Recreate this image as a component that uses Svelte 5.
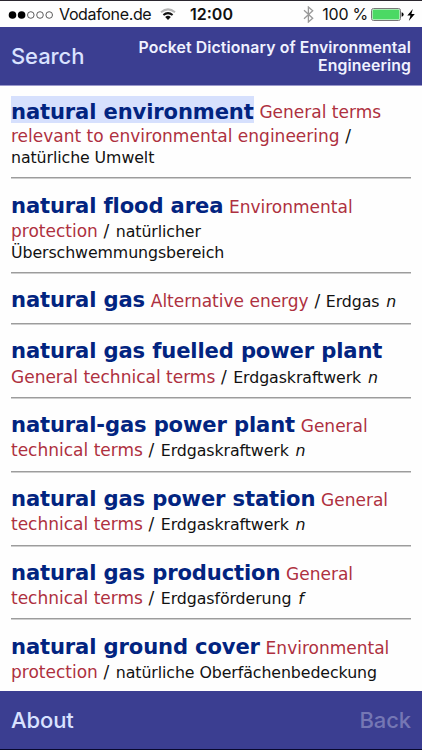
<script>
	const title = ['Pocket Dictionary of Environmental', 'Engineering']

	// every entry is a list of lines, every line a list of [kind, text] runs
	const entries = [
		[
			[['head marked', 'natural environment'], ['topic', 'General terms']],
			[['topic', 'relevant to environmental engineering'], ['slash', '/']],
			[['german', 'natürliche Umwelt']]
		],
		[
			[['head', 'natural flood area'], ['topic', 'Environmental']],
			[['topic', 'protection'], ['slash', '/'], ['german', 'natürlicher']],
			[['german', 'Überschwemmungsbereich']]
		],
		[
			[['head', 'natural gas'], ['topic', 'Alternative energy'], ['slash', '/'], ['german', 'Erdgas'], ['gender', 'n']]
		],
		[
			[['head', 'natural gas fuelled power plant']],
			[['topic', 'General technical terms'], ['slash', '/'], ['german', 'Erdgaskraftwerk'], ['gender', 'n']]
		],
		[
			[['head', 'natural-gas power plant'], ['topic', 'General']],
			[['topic', 'technical terms'], ['slash', '/'], ['german', 'Erdgaskraftwerk'], ['gender', 'n']]
		],
		[
			[['head', 'natural gas power station'], ['topic', 'General']],
			[['topic', 'technical terms'], ['slash', '/'], ['german', 'Erdgaskraftwerk'], ['gender', 'n']]
		],
		[
			[['head', 'natural gas production'], ['topic', 'General']],
			[['topic', 'technical terms'], ['slash', '/'], ['german', 'Erdgasförderung'], ['gender', 'f']]
		],
		[
			[['head', 'natural ground cover'], ['topic', 'Environmental']],
			[['topic', 'protection'], ['slash', '/'], ['german', 'natürliche Oberfächenbedeckung']]
		]
	]
</script>

<div class="phone">
	<div class="status">
		<div class="left">
			<svg class="dots" width="46" height="8" viewBox="0 0 46 8">
				<circle cx="4.5" cy="4" r="3.8" />
				<circle cx="13.6" cy="4" r="3.8" />
				<circle class="off" cx="22.8" cy="4" r="3.3" />
				<circle class="off" cx="32" cy="4" r="3.3" />
				<circle class="off" cx="41.2" cy="4" r="3.3" />
			</svg>
			<span class="carrier">Vodafone.de</span>
			<svg class="wifi" width="16" height="13" viewBox="0 0 16 13">
				<path class="weak" d="M1 4.3Q8 -1.6 15 4.3" />
				<path d="M3.4 7Q8 3.2 12.6 7" />
				<path class="tip" d="M5.2 8.9Q8 6.7 10.8 8.9L8 12Z" />
			</svg>
		</div>
		<span class="time">12:00</span>
		<div class="right">
			<svg class="bluetooth" width="11" height="17" viewBox="0 0 11 17">
				<path d="M1 4.3L9.7 12.3L5.4 16V1L9.7 4.7L1 12.7" />
			</svg>
			<span class="percent">100 %</span>
			<svg width="33" height="13" viewBox="0 0 33 13">
				<rect class="shell" x=".5" y=".5" width="29" height="12" rx="2" />
				<rect class="charge" x="1.5" y="1.5" width="27" height="10" rx="1" />
				<path d="M30.6 4.3Q32.6 4.8 32.6 6.5T30.6 8.7Z" />
			</svg>
			<svg class="bolt" width="8" height="12" viewBox="0 0 8 12">
				<path d="M5.8 0L.3 6.6H3.5L1.8 12L7.8 4.9H4.4Z" />
			</svg>
		</div>
	</div>

	<header>
		<button>Search</button>
		<h1>
			{#each title as line}
				<span>{line}</span>
			{/each}
		</h1>
	</header>

	<main>
		{#each entries as lines}
			<article>
				{#each lines as line}
					<p>
						{#each line as [kind, text]}
							<span class={kind}>{text}</span>{' '}
						{/each}
					</p>
				{/each}
			</article>
		{/each}
	</main>

	<footer>
		<button>About</button>
		<button disabled>Back</button>
	</footer>
</div>

<style>
	:global(body) {
		margin: 0;
		background: #fff;
	}
	.phone {
		width: 422px;
		height: 750px;
		display: flex;
		flex-direction: column;
		overflow: hidden;
		box-sizing: border-box;
		border-top: 1px solid #2a262e;
		border-bottom: 1px solid #07072c;
		background: #fefefe;
		font-family: Inter, 'Liberation Sans', sans-serif;
	}
	.status {
		flex: none;
		height: 26px;
		display: grid;
		grid-template-columns: 1fr auto 1fr;
		align-items: center;
		padding: 0 7px 0 8px;
		color: #111;
		font-size: 16px;
		line-height: 27px;
		white-space: nowrap;
	}
	.left,
	.right {
		display: flex;
		align-items: center;
	}
	.right {
		justify-content: flex-end;
	}
	.carrier {
		margin-left: 5px;
		letter-spacing: -0.35px;
	}
	.dots .off {
		fill: none;
		stroke: #333;
		stroke-width: 0.8;
	}
	.wifi {
		margin-left: 9px;
		fill: none;
		stroke: #111;
		stroke-width: 2;
	}
	.wifi .weak {
		stroke: #b5b5b5;
	}
	.wifi .tip {
		fill: #111;
		stroke: none;
	}
	.time {
		font-weight: 600;
	}
	.bluetooth {
		margin-right: 8px;
		fill: none;
		stroke: #999;
		stroke-width: 1.3;
	}
	.percent {
		margin-right: 3px;
		letter-spacing: -0.25px;
	}
	.shell {
		fill: #fff;
		stroke: #777;
	}
	.charge {
		fill: #4bd964;
	}
	.bolt {
		margin-left: 3px;
	}
	header,
	footer {
		flex: none;
		display: flex;
		justify-content: space-between;
		padding: 0 11px;
		background: #3b3e91;
	}
	header {
		height: 58px;
		border-bottom: 1px solid #9a98cb;
	}
	footer {
		height: 58.5px;
	}
	button {
		border: 0 none;
		padding: 0;
		background: transparent;
		color: #d9e2ff;
		font: 500 22px/58px Inter, 'Liberation Sans', sans-serif;
		letter-spacing: -0.1px;
	}
	button:disabled {
		color: #7577b4;
	}
	h1 {
		margin: 0;
		padding-top: 11.5px;
		color: #f0f2ff;
		font-size: 15.8px;
		font-weight: 600;
		letter-spacing: 0.12px;
		line-height: 18.5px;
		text-align: right;
	}
	h1 span {
		display: block;
	}
	main {
		flex: 1;
		min-height: 0;
		overflow: hidden;
		padding: 0 11px;
		font-family: 'DejaVu Sans', Verdana, sans-serif;
	}
	article {
		padding: 12.4px 0 9.6px;
		border-bottom: 1px solid #cecece;
		box-shadow: inset 0 -1px #9c9c9c;
	}
	article:first-child {
		padding-top: 11.3px;
	}
	p {
		margin: 0;
		height: 28.2px;
		font-size: 21.1px;
		line-height: 28.2px;
		white-space: nowrap;
		word-spacing: -1px;
	}
	p:nth-child(2) {
		height: 22.7px;
		font-size: 17px;
		line-height: 22.7px;
		word-spacing: 0.2px;
	}
	p:nth-child(3) {
		height: 20.6px;
		font-size: 15.8px;
		line-height: 20.6px;
	}
	p span {
		line-height: 1;
		word-spacing: 0;
	}
	.head {
		color: #022480;
		font-size: 21.1px;
		font-weight: bold;
		letter-spacing: -0.13px;
	}
	.marked {
		padding-top: 2.7px;
		background: #d6e0fd;
	}
	.topic {
		color: #ae3040;
		font-size: 17px;
	}
	.slash {
		color: #111;
		font-size: 17px;
	}
	p:nth-child(2) .slash {
		margin-right: 1px;
	}
	.german,
	.gender {
		color: #111;
		font-size: 15.8px;
		letter-spacing: -0.09px;
	}
	.gender {
		margin-left: 1.2px;
		font-style: italic;
	}
</style>
